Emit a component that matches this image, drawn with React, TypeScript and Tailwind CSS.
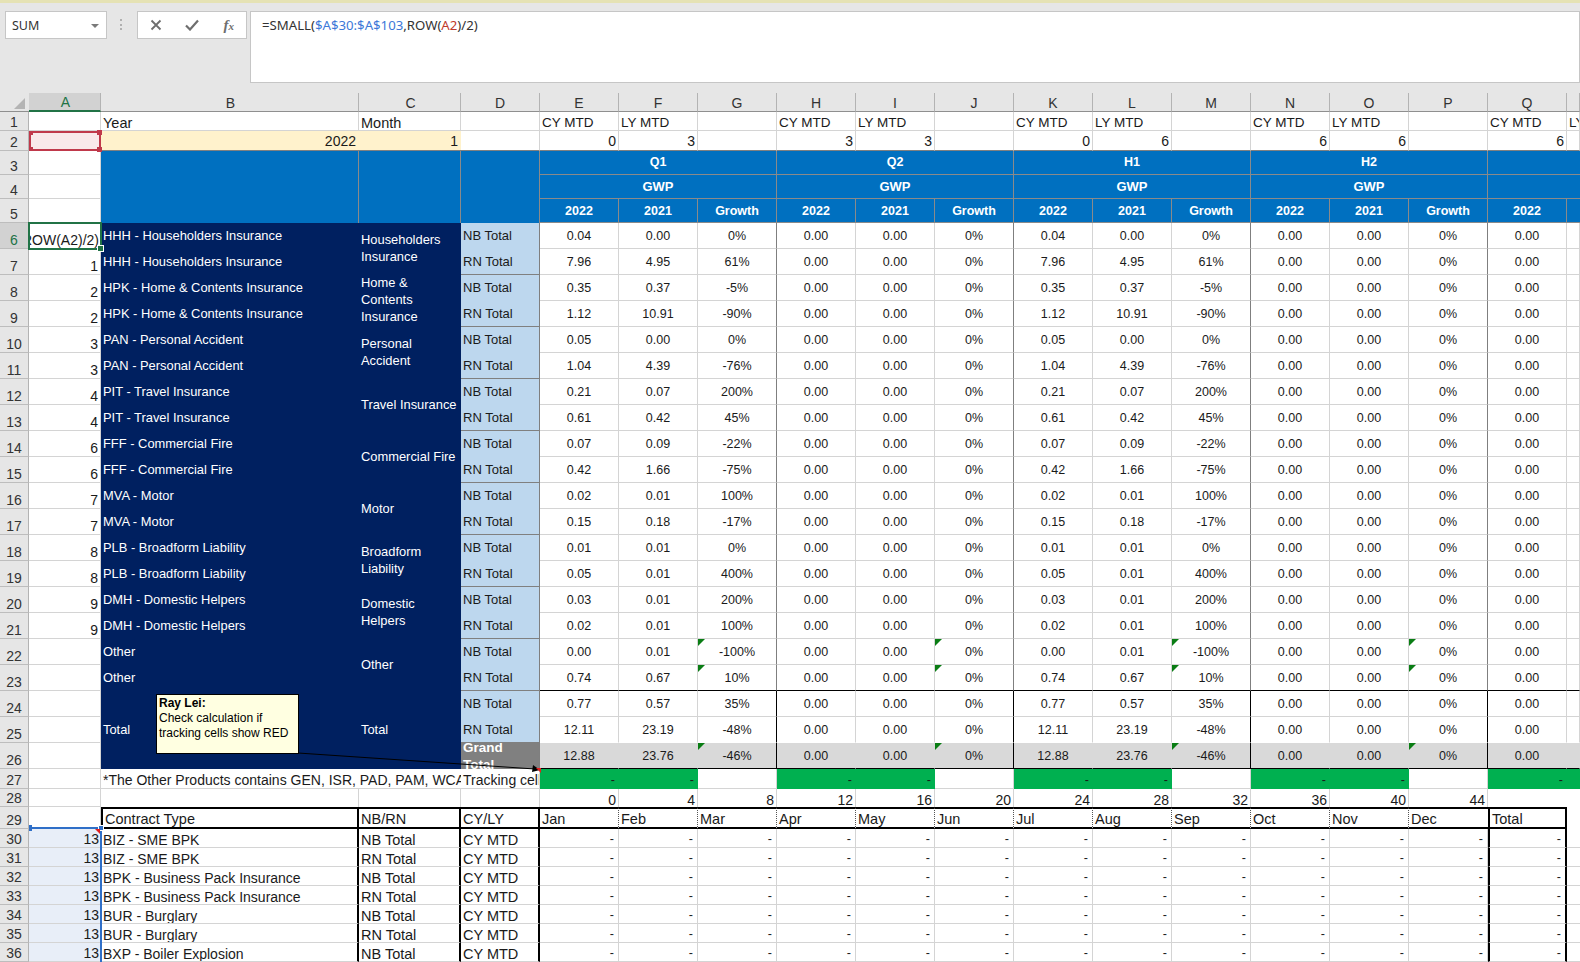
import React, { Fragment } from "react";

const LETTERS = ["A","B","C","D","E","F","G","H","I","J","K","L","M","N","O","P","Q","R"];
const GROUPS = ["Q1","Q2","H1","H2"];

const products: [string, string[]][] = [
  ["HHH - Householders Insurance", ["Householders", "Insurance"]],
  ["HPK - Home & Contents Insurance", ["Home &", "Contents", "Insurance"]],
  ["PAN - Personal Accident", ["Personal", "Accident"]],
  ["PIT - Travel Insurance", ["Travel Insurance"]],
  ["FFF - Commercial Fire", ["Commercial Fire"]],
  ["MVA - Motor", ["Motor"]],
  ["PLB - Broadform Liability", ["Broadform", "Liability"]],
  ["DMH - Domestic Helpers", ["Domestic", "Helpers"]],
  ["Other", ["Other"]],
];

const values: [string, string, string][] = [
  ["0.04","0.00","0%"],["7.96","4.95","61%"],["0.35","0.37","-5%"],["1.12","10.91","-90%"],
  ["0.05","0.00","0%"],["1.04","4.39","-76%"],["0.21","0.07","200%"],["0.61","0.42","45%"],
  ["0.07","0.09","-22%"],["0.42","1.66","-75%"],["0.02","0.01","100%"],["0.15","0.18","-17%"],
  ["0.01","0.01","0%"],["0.05","0.01","400%"],["0.03","0.01","200%"],["0.02","0.01","100%"],
  ["0.00","0.01","-100%"],["0.74","0.67","10%"],["0.77","0.57","35%"],["12.11","23.19","-48%"],
  ["12.88","23.76","-46%"],
];

const aValues = ["","1","2","2","3","3","4","4","6","6","7","7","8","8","9","9","","","","",""];

const lower: [string, string][] = [
  ["BIZ - SME BPK","NB Total"],["BIZ - SME BPK","RN Total"],
  ["BPK - Business Pack Insurance","NB Total"],["BPK - Business Pack Insurance","RN Total"],
  ["BUR - Burglary","NB Total"],["BUR - Burglary","RN Total"],["BXP - Boiler Explosion","NB Total"],
];

const months = ["Jan","Feb","Mar","Apr","May","Jun","Jul","Aug","Sep","Oct","Nov","Dec"];

function RowHead({ n, active }: { n: number; active?: boolean }) {
  return (
    <div className={`flex items-end justify-center border-r border-b border-r-[#b3b3b3] border-b-[#bdbdbd] text-[14px] leading-[15px] ${active ? "bg-[#d2d2d2] text-[#217346]" : "bg-[#e6e6e6] text-[#333333]"}`}>
      {n}
    </div>
  );
}

function Cell({ className = "", children }: { className?: string; children?: React.ReactNode }) {
  return <div className={`flex overflow-hidden whitespace-nowrap px-[2px] ${className}`}>{children}</div>;
}

function Triangle() {
  return <span className="absolute left-0 top-0 h-0 w-0 border-t-[7px] border-r-[7px] border-t-[#0a7d14] border-r-transparent" />;
}

export default function App() {
  const tri = (i: number) => i === 16 || i === 17 || i === 20;
  return (
    <div className="flex h-[962px] w-[1580px] flex-col overflow-hidden bg-[#e6e6e6] font-[family-name:'Liberation_Sans',sans-serif] text-[#1a1a1a]">
      <div className="h-[3px] bg-[#e5e2b4]" />
      <div className="flex h-[90px] items-start pt-[8px] pl-[5px] font-[family-name:'Noto_Sans',sans-serif]">
        <div className="flex h-[28px] w-[102px] items-center justify-between border border-[#c6c6c6] bg-white pl-[6px] pr-[7px] pt-[2px] text-[12.5px] text-[#333333]">
          <span>SUM</span>
          <span className="h-0 w-0 border-x-[4px] border-t-[4px] border-x-transparent border-t-[#7a7a7a]" />
        </div>
        <div className="ml-[13px] mt-[8px] flex h-[11px] w-[2px] flex-col justify-between">
          <span className="h-[2px] w-[2px] bg-[#b0b0b0]" />
          <span className="h-[2px] w-[2px] bg-[#b0b0b0]" />
          <span className="h-[2px] w-[2px] bg-[#b0b0b0]" />
        </div>
        <div className="ml-[15px] flex h-[28px] w-[110px] items-center justify-between border border-[#c6c6c6] bg-white pl-[12px] pr-[12px]">
          <svg width="12" height="12" viewBox="0 0 12 12"><path d="M1.5 1.5 10.5 10.5M10.5 1.5 1.5 10.5" stroke="#6e6e6e" strokeWidth="1.8" fill="none" /></svg>
          <svg className="-ml-[2px]" width="14" height="12" viewBox="0 0 14 12"><path d="M1 6.5 5 10.5 13 1.5" stroke="#6e6e6e" strokeWidth="2.2" fill="none" /></svg>
          <span className="font-[family-name:'Liberation_Serif',serif] text-[15px] font-bold italic leading-none text-[#6e6e6e]">f<span className="text-[11px]">x</span></span>
        </div>
        <div className="ml-[3px] h-[72px] flex-1 border border-[#c6c6c6] bg-white pl-[11px] pt-[3px] text-[13.2px] leading-[20px] text-[#333333]">
          =SMALL(<span className="text-[#3c78d8]">$A$30:$A$103</span>,ROW(<span className="text-[#c0392b]">A2</span>)/2)
        </div>
      </div>

      <div className="relative grid flex-1 grid-cols-[29px_72px_258px_102px_79px_repeat(13,79px)_13px] grid-rows-[19px_19px_20px_24px_24px_24px_repeat(21,26px)_20px_18px_22px_repeat(7,19px)] bg-white">
        {/* column letters */}
        <div className="relative border-b border-b-[#8f8f8f] bg-[#e6e6e6]">
          <svg className="absolute left-[14px] top-[5px]" width="11" height="11" viewBox="0 0 11 11"><path d="M11 0V11H0Z" fill="#b4b4b4" /></svg>
        </div>
        {LETTERS.map((l, i) => (
          <div key={l} className={`flex items-end justify-center border-r border-r-[#b3b3b3] text-[14px] leading-[16px] ${i < 3 ? "pl-[2px]" : ""} ${i === 0 ? "border-b-2 border-b-[#217346] bg-[#d2d2d2] text-[#217346]" : "border-b border-b-[#8f8f8f] bg-[#e6e6e6] text-[#333333]"}`}>
            {l === "R" ? "" : l}
          </div>
        ))}

        {/* row 1 */}
        <RowHead n={1} />
        <Cell className="border-r border-b border-[#d4d4d4]" />
        <Cell className="items-end border-r border-b border-[#d4d4d4] text-[14.5px] leading-[14px]">Year</Cell>
        <Cell className="items-end border-r border-b border-[#d4d4d4] text-[14.5px] leading-[14px]">Month</Cell>
        <Cell className="border-r border-b border-[#d4d4d4]" />
        {["CY MTD","LY MTD","","CY MTD","LY MTD","","CY MTD","LY MTD","","CY MTD","LY MTD","","CY MTD","LY MTD"].map((t, i) => (
          <Cell key={i} className="items-end border-r border-b border-[#d4d4d4] text-[13.5px] leading-[14px]">{t}</Cell>
        ))}

        {/* row 2 */}
        <RowHead n={2} />
        <Cell className="bg-[#f9e9ea]" />
        <Cell className="items-end justify-end border-b border-b-[#808080] bg-[#fff2cc] pr-[3px] text-[14px] leading-[17px]">2022</Cell>
        <Cell className="items-end justify-end border-b border-b-[#808080] bg-[#fff2cc] pr-[3px] text-[14px] leading-[17px]">1</Cell>
        <Cell className="border-r border-b border-r-[#d4d4d4] border-b-[#808080]" />
        {["0","3","","3","3","","0","6","","6","6","","6",""].map((t, i) => (
          <Cell key={i} className="items-end justify-end border-r border-b border-r-[#d4d4d4] border-b-[#808080] text-[14px] leading-[17px]">{t}</Cell>
        ))}

        {/* rows 3-5 */}
        <RowHead n={3} />
        <Cell className="border-r border-b border-[#d4d4d4]" />
        <Cell className="row-span-3 border-r border-r-[#8a8a8a] bg-[#0070c0]" />
        <Cell className="row-span-3 border-r border-r-[#8a8a8a] bg-[#0070c0]" />
        <Cell className="row-span-3 border-r border-r-[#8a8a8a] bg-[#0070c0]" />
        {GROUPS.map((g) => (
          <Cell key={g} className="col-span-3 items-center justify-center border-r border-b border-[#8a8a8a] bg-[#0070c0] text-[12.5px] font-bold text-white">{g}</Cell>
        ))}
        <Cell className="col-span-2 border-b border-[#8a8a8a] bg-[#0070c0]" />

        <RowHead n={4} />
        <Cell className="border-r border-b border-[#d4d4d4]" />
        {GROUPS.map((g) => (
          <Cell key={g} className="col-span-3 items-center justify-center border-r border-b border-[#8a8a8a] bg-[#0070c0] text-[13px] font-bold text-white">GWP</Cell>
        ))}
        <Cell className="col-span-2 border-b border-[#8a8a8a] bg-[#0070c0]" />

        <RowHead n={5} />
        <Cell className="border-r border-b border-[#d4d4d4]" />
        {GROUPS.map((g) => (
          <Fragment key={g}>
            {["2022","2021","Growth"].map((t) => (
              <Cell key={t} className="items-center justify-center border-r border-b border-[#8a8a8a] bg-[#0070c0] pt-[2px] text-[12.5px] font-bold text-white">{t}</Cell>
            ))}
          </Fragment>
        ))}
        <Cell className="items-center justify-center border-r border-b border-[#8a8a8a] bg-[#0070c0] pt-[2px] text-[12.5px] font-bold text-white">2022</Cell>
        <Cell className="border-b border-[#8a8a8a] bg-[#0070c0]" />

        {/* rows 6-26 */}
        {values.map((v, i) => {
          const total = i >= 18;
          const grand = i === 20;
          const name = i < 18 ? products[Math.floor(i / 2)][0] : "";
          const lines = i < 18 ? products[Math.floor(i / 2)][1] : [];
          const rowBorder = i === 17 || i === 20 ? "border-b-black" : i === 19 ? "border-b-transparent" : "border-b-[#d4d4d4]";
          const bg = grand ? "bg-[#d9d9d9]" : "";
          const groupEnd = total ? "border-r-black" : "border-r-[#7f7f7f]";
          const inner = grand ? "border-r-transparent" : "border-r-[#d4d4d4]";
          const num = (extra: string, t: string, key: number, showTri?: boolean) => (
            <Cell key={key} className={`relative items-center justify-center border-r border-b pt-[2px] text-[12.5px] ${extra} ${rowBorder} ${bg}`}>
              {showTri && <Triangle />}
              {t}
            </Cell>
          );
          return (
            <Fragment key={i}>
              <RowHead n={i + 6} active={i === 0} />
              <Cell className="items-end justify-end border-r border-b border-[#d4d4d4] text-[14px] leading-[15px]">{aValues[i]}</Cell>
              {i < 18 && <Cell className="items-center bg-[#002060] text-[12.9px] text-white">{name}</Cell>}
              {i === 18 && <Cell className="row-span-3 items-center bg-[#002060] text-[12.9px] text-white">Total</Cell>}
              {i < 18 && i % 2 === 0 && (
                <Cell className={`row-span-2 flex-col justify-center bg-[#002060] text-[12.9px] leading-[17px] text-white ${lines.length > 1 ? "pb-[3px]" : "pb-[1px]"}`}>
                  {lines.map((l) => <span key={l}>{l}</span>)}
                </Cell>
              )}
              {i === 18 && <Cell className="row-span-3 items-center bg-[#002060] text-[12.9px] text-white">Total</Cell>}
              {grand ? (
                <Cell className="items-center border-r border-r-[#7f7f7f] bg-[#808080] text-[13.5px] font-bold leading-[17px] text-white">
                  <span>Grand<br />Total</span>
                </Cell>
              ) : (
                <Cell className={`items-center border-r border-r-[#7f7f7f] bg-[#bdd7ee] text-[13px] ${i % 2 === 1 ? "border-b border-b-[#808080]" : ""}`}>{i % 2 === 0 ? "NB Total" : "RN Total"}</Cell>
              )}
              {num(inner, v[0], 0)}
              {num(inner, v[1], 1)}
              {num(groupEnd, v[2], 2, tri(i))}
              {num(inner, "0.00", 3)}
              {num(inner, "0.00", 4)}
              {num(groupEnd, "0%", 5, tri(i))}
              {num(inner, v[0], 6)}
              {num(inner, v[1], 7)}
              {num(groupEnd, v[2], 8, tri(i))}
              {num(inner, "0.00", 9)}
              {num(inner, "0.00", 10)}
              {num(groupEnd, "0%", 11, tri(i))}
              {num(inner, "0.00", 12)}
              {num(inner, "", 13)}
            </Fragment>
          );
        })}

        {/* row 27 */}
        <RowHead n={27} />
        <Cell className="border-r border-b border-[#d4d4d4]" />
        <Cell className="col-span-2 items-end border-b border-[#d4d4d4] text-[14px] leading-[16px]">*The Other Products contains GEN, ISR, PAD, PAM, WCA and others</Cell>
        <Cell className="items-end border-r border-b border-[#d4d4d4] text-[14px] leading-[16px]">Tracking cells show</Cell>
        {[0,1,2,3].map((g) => (
          <Fragment key={g}>
            <Cell className="items-center justify-end bg-[#00b050] pr-[4px] pt-[2px] text-[12.5px]">-</Cell>
            <Cell className="items-center justify-end bg-[#00b050] pr-[4px] pt-[2px] text-[12.5px]">-</Cell>
            <Cell className="border-r border-b border-[#d4d4d4]" />
          </Fragment>
        ))}
        <Cell className="items-center justify-end bg-[#00b050] pr-[4px] pt-[2px] text-[12.5px]">-</Cell>
        <Cell className="bg-[#00b050]" />

        {/* row 28 */}
        <RowHead n={28} />
        <Cell className="border-r border-b border-[#d4d4d4]" />
        <Cell className="border-r border-[#d4d4d4]" />
        <Cell className="border-r border-[#d4d4d4]" />
        <Cell className="border-r border-[#d4d4d4]" />
        {months.map((_, i) => (
          <Cell key={i} className="items-end justify-end border-r border-[#d4d4d4] text-[14px] leading-[14px]">{i * 4}</Cell>
        ))}
        <Cell />
        <Cell />

        {/* row 29 */}
        <RowHead n={29} />
        <Cell className="border-r border-b border-[#d4d4d4]" />
        <Cell className="items-end border-2 border-black text-[14.5px] leading-[15px]">Contract Type</Cell>
        <Cell className="items-end border-y-2 border-r-2 border-black text-[14.5px] leading-[15px]">NB/RN</Cell>
        <Cell className="items-end border-y-2 border-r-2 border-black text-[14.5px] leading-[15px]">CY/LY</Cell>
        {months.map((m, i) => (
          <Cell key={m} className={`items-end border-y-2 border-black text-[14.5px] leading-[15px] ${i === 11 ? "" : "border-r border-r-[#555555] [border-right-style:dotted]"}`}>{m}</Cell>
        ))}
        <Cell className="items-end border-2 border-black text-[14.5px] leading-[15px]">Total</Cell>
        <Cell />

        {/* rows 30-36 */}
        {lower.map(([p, t], i) => (
          <Fragment key={i}>
            <RowHead n={i + 30} />
            <Cell className="items-end justify-end border-b border-[#d4d4d4] bg-[#e8eef8] text-[14px] leading-[15px]">13</Cell>
            <Cell className="items-end border-r-2 border-b border-r-black border-b-[#d4d4d4] text-[14px] leading-[14px]">{p}</Cell>
            <Cell className="items-end border-r-2 border-b border-r-black border-b-[#d4d4d4] text-[14.5px] leading-[14px]">{t}</Cell>
            <Cell className="items-end border-r-2 border-b border-r-black border-b-[#d4d4d4] text-[14.5px] leading-[14px]">CY MTD</Cell>
            {months.map((m) => (
              <Cell key={m} className="items-center justify-end border-r border-b border-[#d4d4d4] pr-[4px] pt-[2px] text-[12.5px]">-</Cell>
            ))}
            <Cell className="items-center justify-end border-x-2 border-b border-x-black border-b-[#d4d4d4] pr-[4px] pt-[2px] text-[12.5px]">-</Cell>
            <Cell className="border-b border-[#d4d4d4]" />
          </Fragment>
        ))}

        {/* overlays: range highlights, active cell, comment */}
        <div className="pointer-events-none absolute left-[29px] top-[38px] h-[20px] w-[72px] border-2 border-[#c0394b]">
          <span className="absolute -left-[2px] -top-[2px] h-[4px] w-[4px] bg-[#c0394b]" />
          <span className="absolute -right-[3px] -top-[3px] h-[5px] w-[5px] bg-[#c0394b]" />
          <span className="absolute -left-[2px] -bottom-[2px] h-[4px] w-[4px] bg-[#c0394b]" />
          <span className="absolute -right-[3px] -bottom-[3px] h-[5px] w-[5px] bg-[#c0394b]" />
        </div>
        <div className="absolute left-[28px] top-[129px] h-[28px] w-[74px] border-2 border-[#217346] bg-white text-[14px] leading-[15px]">
          <div className="flex h-full items-end justify-end overflow-hidden whitespace-nowrap pr-[1px]">
            <span className="shrink-0">=SMALL($A$30:$A$103,ROW(A2)/2)</span>
          </div>
          <span className="absolute -bottom-[4px] -right-[4px] h-[7px] w-[7px] border border-white bg-[#217346]" />
        </div>
        <div className="pointer-events-none absolute left-[29px] top-[734px] h-[2px] w-[72px] bg-[#2f6fc8]">
          <span className="absolute -top-[2px] left-0 h-[6px] w-[3px] bg-[#2f6fc8]" />
          <span className="absolute -right-[3px] -top-[2px] h-[6px] w-[6px] border border-white bg-[#2f6fc8]" />
        </div>
        <div className="pointer-events-none absolute left-[100px] top-[738px] h-[131px] w-[2px] bg-[#2f6fc8]" />
        <span className="pointer-events-none absolute left-[95px] top-[736px] h-0 w-0 border-l-[5px] border-t-[5px] border-l-transparent border-t-[#e02020]" />

        <svg className="pointer-events-none absolute left-[296px] top-[658px]" width="250" height="22" viewBox="0 0 250 22">
          <path d="M2 2 239 18" stroke="black" strokeWidth="1" fill="none" />
          <path d="M237 14 244 19 236 21Z" fill="black" />
        </svg>
        <span className="pointer-events-none absolute left-[536px] top-[675px] h-0 w-0 border-l-[5px] border-t-[5px] border-l-transparent border-t-[#e02020]" />
        <div className="absolute left-[156px] top-[601px] h-[60px] w-[143px] border border-black bg-[#ffffe1] px-[2px] pt-[1px] text-[12px] leading-[15px] text-black">
          <div className="font-bold">Ray Lei:</div>
          <div>Check calculation if</div>
          <div>tracking cells show RED</div>
        </div>
      </div>
    </div>
  );
}
